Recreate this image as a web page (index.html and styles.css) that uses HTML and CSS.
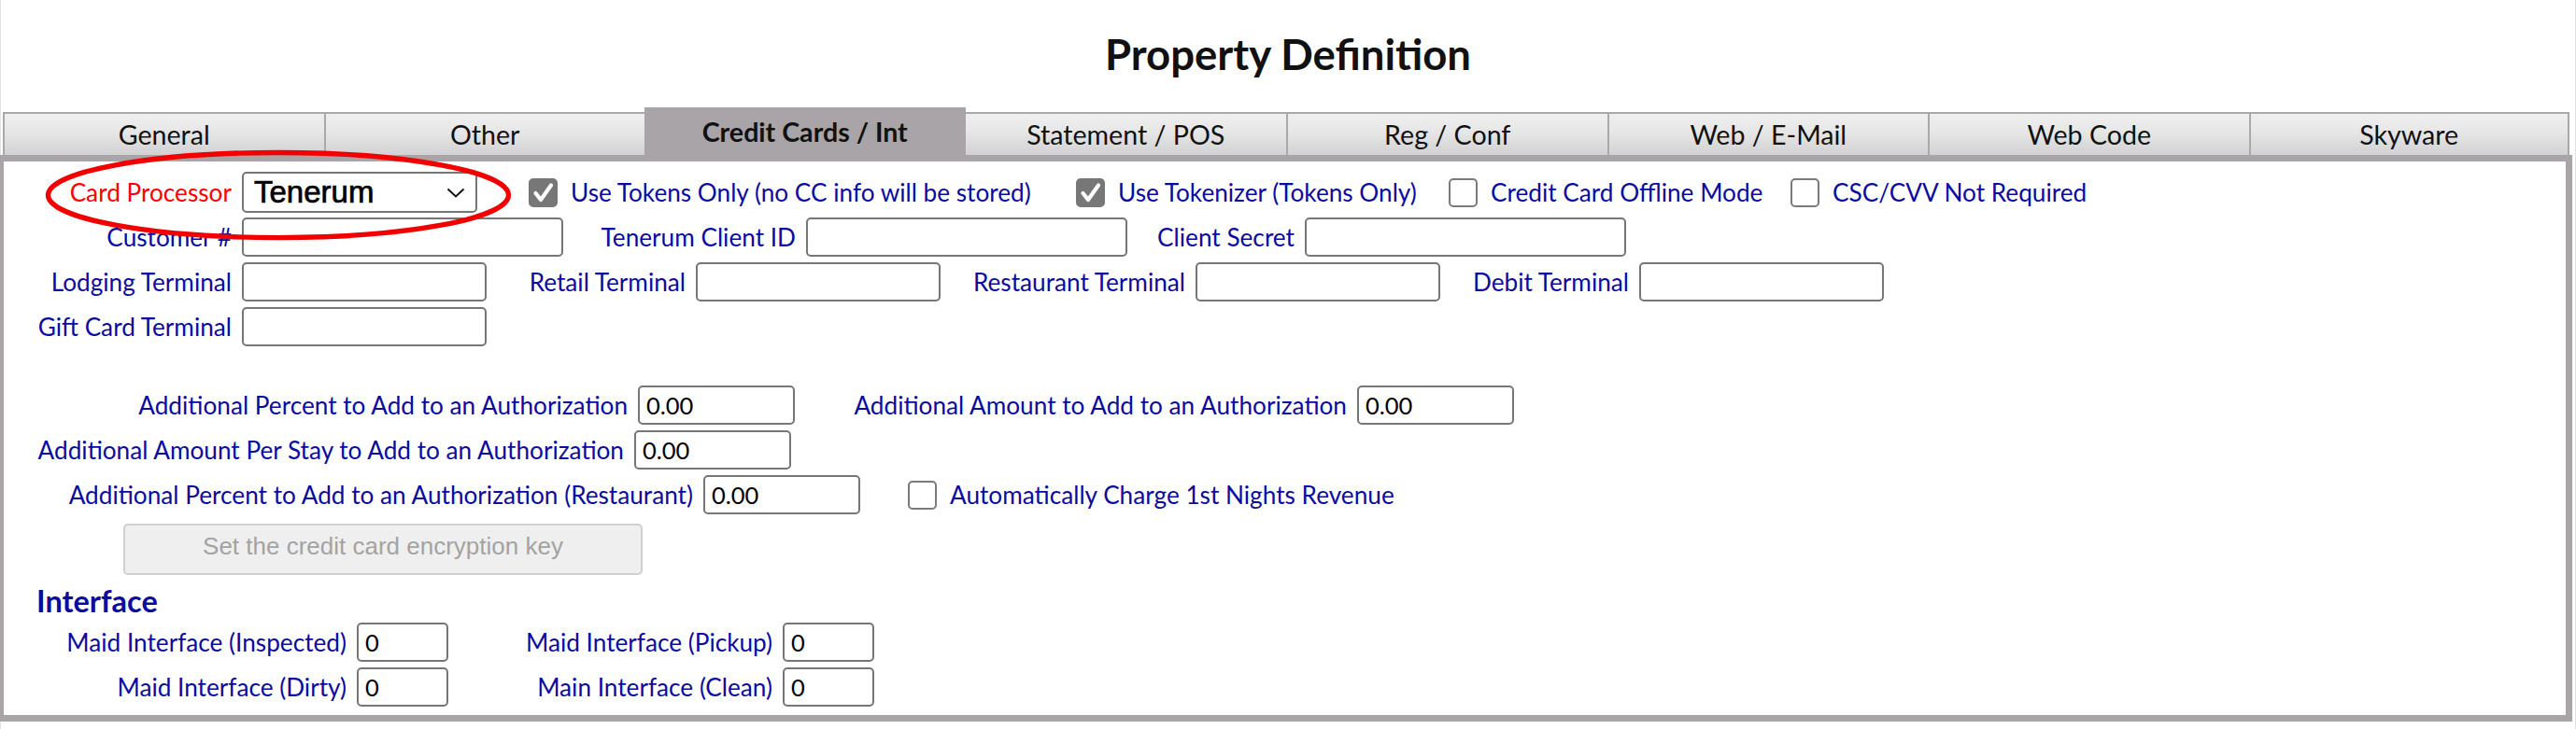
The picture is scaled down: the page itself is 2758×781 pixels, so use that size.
FILE: index.html
```html
<!DOCTYPE html>
<html lang="en">
<head>
<meta charset="utf-8">
<title>Property Definition</title>
<link rel="stylesheet" href="styles.css">
</head>
<body>
<div class="page">
  <header class="header"><h1 class="title">Property Definition</h1></header>

  <nav class="tabs">
    <a class="tab">General</a>
    <a class="tab">Other</a>
    <a class="tab active">Credit Cards / Int</a>
    <a class="tab">Statement / POS</a>
    <a class="tab">Reg / Conf</a>
    <a class="tab">Web / E-Mail</a>
    <a class="tab">Web Code</a>
    <a class="tab">Skyware</a>
  </nav>

  <main class="panel">
    <div class="row">
      <span class="lbl lbl-first red">Card Processor</span>
      <div class="select">
        <span class="select-value">Tenerum</span>
        <svg class="chev" viewBox="0 0 20 11"><path d="M1.5 1.5 L10 9.5 L18.5 1.5"/></svg>
      </div>
      <label class="opt opt-tokens"><span class="cb on"><svg viewBox="0 0 31 31"><path d="M7.5 16 L13 23 L24 7.5"/></svg></span><span class="lbl">Use Tokens Only (no CC info will be stored)</span></label>
      <label class="opt opt-tokenizer"><span class="cb on"><svg viewBox="0 0 31 31"><path d="M7.5 16 L13 23 L24 7.5"/></svg></span><span class="lbl">Use Tokenizer (Tokens Only)</span></label>
      <label class="opt opt-offline"><span class="cb"></span><span class="lbl">Credit Card Offline Mode</span></label>
      <label class="opt"><span class="cb"></span><span class="lbl">CSC/CVV Not Required</span></label>
    </div>

    <div class="row">
      <span class="lbl lbl-first">Customer #</span>
      <input class="field w-lg" type="text" value="">
      <span class="lbl lbl-clientid">Tenerum Client ID</span>
      <input class="field w-lg" type="text" value="">
      <span class="lbl lbl-secret">Client Secret</span>
      <input class="field w-lg" type="text" value="">
    </div>

    <div class="row">
      <span class="lbl lbl-first">Lodging Terminal</span>
      <input class="field w-md" type="text" value="">
      <span class="lbl lbl-retail">Retail Terminal</span>
      <input class="field w-md" type="text" value="">
      <span class="lbl lbl-restaurant">Restaurant Terminal</span>
      <input class="field w-md" type="text" value="">
      <span class="lbl lbl-debit">Debit Terminal</span>
      <input class="field w-md" type="text" value="">
    </div>

    <div class="row">
      <span class="lbl lbl-first">Gift Card Terminal</span>
      <input class="field w-md" type="text" value="">
    </div>

    <div class="row row-gap">
      <span class="lbl lbl-pct">Additional Percent to Add to an Authorization</span>
      <input class="field w-amt" type="text" value="0.00">
      <span class="lbl lbl-amt">Additional Amount to Add to an Authorization</span>
      <input class="field w-amt" type="text" value="0.00">
    </div>

    <div class="row">
      <span class="lbl lbl-stay">Additional Amount Per Stay to Add to an Authorization</span>
      <input class="field w-amt" type="text" value="0.00">
    </div>

    <div class="row">
      <span class="lbl lbl-pctrest">Additional Percent to Add to an Authorization (Restaurant)</span>
      <input class="field w-amt" type="text" value="0.00">
      <label class="opt opt-charge"><span class="cb"></span><span class="lbl">Automatically Charge 1st Nights Revenue</span></label>
    </div>

    <div class="btn-row">
      <button class="btn" type="button" disabled>Set the credit card encryption key</button>
    </div>

    <h2 class="section">Interface</h2>

    <div class="row">
      <span class="lbl lbl-maid">Maid Interface (Inspected)</span>
      <input class="field w-sm" type="text" value="0">
      <span class="lbl lbl-maid2">Maid Interface (Pickup)</span>
      <input class="field w-sm" type="text" value="0">
    </div>

    <div class="row">
      <span class="lbl lbl-maid">Maid Interface (Dirty)</span>
      <input class="field w-sm" type="text" value="0">
      <span class="lbl lbl-maid2">Main Interface (Clean)</span>
      <input class="field w-sm" type="text" value="0">
    </div>
  </main>

  <svg class="highlight" viewBox="0 0 510 100" aria-hidden="true"><ellipse cx="255" cy="50" rx="251.5" ry="46.5"/></svg>
</div>
</body>
</html>
```

FILE: styles.css
```css
* { box-sizing: border-box; }

html, body {
  margin: 0;
  padding: 0;
  background: #ffffff;
}

body {
  font-family: "Lato", "Liberation Sans", sans-serif;
  color: #111111;
}

.page {
  position: relative;
  width: 2758px;
  height: 781px;
  box-shadow: inset 1px 0 #e3e3e3, inset -1px 0 #e3e3e3;
}

/* ---------- header ---------- */
.header {
  height: 115px;
  display: flex;
  align-items: center;
  justify-content: center;
}

.title {
  margin: 0;
  font-size: 45.5px;
  font-weight: 700;
  color: #111111;
  line-height: 1;
}

/* ---------- tabs ---------- */
.tabs {
  width: 2754px;
  height: 51px;
  padding: 0 3px;
  display: grid;
  grid-template-columns: repeat(8, 1fr);
  align-items: end;
}

.tab {
  height: 46px;
  display: flex;
  align-items: center;
  justify-content: center;
  font-size: 28.6px;
  color: #111111;
  background: linear-gradient(#efefef 0%, #e6e6e6 45%, #d2d1d3 100%);
  border-top: 2px solid #a9a9a9;
  border-left: 2px solid #a9a9a9;
}

.tab:last-child { border-right: 2px solid #a9a9a9; }

.tab.active {
  height: 51px;
  background: #a8a4a7;
  border: none;
  font-weight: 700;
  color: #111111;
}

.tab.active + .tab { border-left: none; }

/* ---------- panel ---------- */
.panel {
  width: 2754px;
  border: 7px solid #a8a4a7;
  border-left-width: 4px;
  padding: 9px 0 6px 0;
}

.row {
  height: 48px;
  display: flex;
  align-items: center;
}

.row-gap { margin-top: 36px; }

.lbl {
  font-size: 26.2px;
  color: #0b0ba0;
  white-space: nowrap;
  flex: none;
}

.lbl.red { color: #ff0000; }

.lbl-first, .lbl-clientid, .lbl-secret, .lbl-retail, .lbl-restaurant,
.lbl-debit, .lbl-pct, .lbl-amt, .lbl-stay, .lbl-pctrest, .lbl-maid, .lbl-maid2 {
  text-align: right;
}

.lbl-first { width: 244px; }
.lbl-clientid { width: 249px; }
.lbl-secret { width: 179px; }
.lbl-retail { width: 213px; }
.lbl-restaurant { width: 262px; }
.lbl-debit { width: 202px; }
.lbl-pct { width: 668px; }
.lbl-amt { width: 591px; }
.lbl-stay { width: 664px; }
.lbl-pctrest { width: 738px; }
.lbl-maid { width: 367px; }
.lbl-maid2 { width: 347px; }

/* ---------- fields ---------- */
.field {
  flex: none;
  height: 42px;
  margin: 0 0 0 11px;
  padding: 0 7px;
  border: 2px solid #767676;
  border-radius: 5px;
  background: #ffffff;
  font-family: "Lato", "Liberation Sans", sans-serif;
  font-size: 25.5px;
  color: #000000;
  outline: none;
}

.w-lg { width: 344px; }
.w-md { width: 262px; }
.w-amt { width: 168px; }
.w-sm { width: 98px; }

.select {
  flex: none;
  width: 252px;
  height: 44px;
  margin-left: 11px;
  padding: 0 11px 0 11px;
  border: 2px solid #767676;
  border-radius: 5px;
  display: flex;
  align-items: center;
  justify-content: space-between;
  background: #ffffff;
}

.select-value {
  font-family: "Liberation Sans", Arial, sans-serif;
  font-size: 33px;
  color: #000000;
  -webkit-text-stroke: 0.7px #000000;
}

.chev {
  width: 20px;
  height: 11px;
  fill: none;
  stroke: #111111;
  stroke-width: 2;
}

/* ---------- checkboxes ---------- */
.opt {
  flex: none;
  display: flex;
  align-items: center;
  gap: 14px;
}

.opt-tokens { margin-left: 55px; width: 586px; }
.opt-tokenizer { width: 399px; }
.opt-offline { width: 366px; }
.opt-charge { margin-left: 51px; }

.cb {
  flex: none;
  width: 31px;
  height: 31px;
  border: 2px solid #7a7a7a;
  border-radius: 5px;
  background: #ffffff;
  display: flex;
  align-items: center;
  justify-content: center;
}

.cb.on {
  background: #777777;
  border-color: #777777;
}

.cb svg {
  width: 31px;
  height: 31px;
  flex: none;
  fill: none;
  stroke: #ffffff;
  stroke-width: 4.2;
  stroke-linecap: round;
  stroke-linejoin: round;
}

/* ---------- button ---------- */
.btn-row {
  height: 62px;
  padding: 7px 0 0 128px;
}

.btn {
  width: 556px;
  height: 55px;
  padding: 5px 0 0 0;
  display: flex;
  justify-content: center;
  align-items: flex-start;
  background: #efefef;
  border: 2px solid #d0d0d0;
  border-radius: 5px;
  font-family: "Liberation Sans", Arial, sans-serif;
  font-size: 26px;
  line-height: 34px;
  color: #a3a3a3;
}

/* ---------- section heading ---------- */
.section {
  margin: 8px 0 0 0;
  padding-left: 35px;
  height: 40px;
  line-height: 40px;
  font-size: 32.5px;
  font-weight: 700;
  color: #0b0ba0;
}

/* ---------- annotation overlay ---------- */
.highlight {
  position: absolute;
  left: 44px;
  top: 160px;
  width: 508px;
  height: 98px;
  overflow: visible;
}

.highlight ellipse {
  fill: none;
  stroke: #f20000;
  stroke-width: 5.5;
}
```
